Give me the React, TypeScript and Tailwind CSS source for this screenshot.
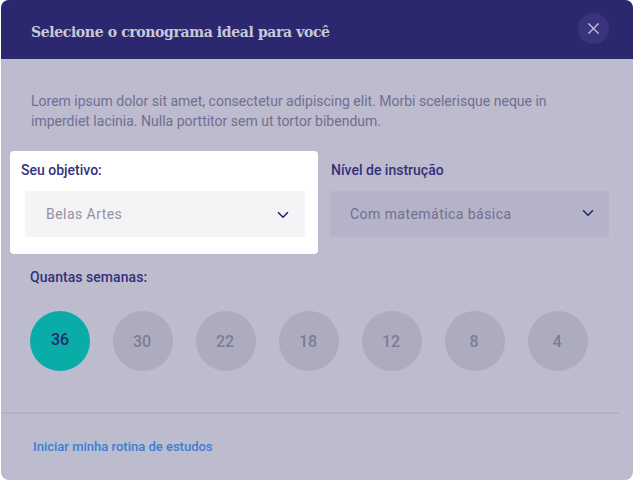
import { ChevronDown, X } from "lucide-react";

const weeks = [36, 30, 22, 18, 12, 8, 4];

export default function App() {
  return (
    <div className="h-[480px] w-[633px] bg-white font-['Roboto',sans-serif]">
      <div className="ml-px flex h-[480px] w-[632px] flex-col overflow-hidden rounded-[8px] bg-[#bdbbce]">
        <header className="flex h-[59px] shrink-0 items-start justify-between bg-[#2c2870] pl-[30px] pr-[24px]">
          <h1 className="mt-[22px] font-['DejaVu_Serif',serif] text-[14px] leading-[20px] font-bold tracking-[-0.37px] text-[#c9c8d8]">
            Selecione o cronograma ideal para você
          </h1>
          <button className="mt-[13px] flex h-[31px] w-[31px] items-center justify-center rounded-full bg-[#39347c] text-[#c5c4d6]">
            <X size={19} strokeWidth={1.5} />
          </button>
        </header>

        <p className="mt-[32px] ml-[30px] w-[530px] text-[14px] leading-[20px] text-[#726e93]">
          Lorem ipsum dolor sit amet, consectetur adipiscing elit. Morbi
          scelerisque neque in imperdiet lacinia. Nulla porttitor sem ut tortor
          bibendum.
        </p>

        <div className="mt-[20px] ml-[9px] flex items-start">
          <div className="h-[103px] w-[308px] rounded-[4px] bg-white pt-[10px] pl-[11px]">
            <label className="block text-[14px] leading-[18px] font-medium text-[#35317a]">
              Seu objetivo:
            </label>
            <div className="mt-[12px] ml-[4px] flex h-[46px] w-[280px] items-center justify-between rounded-[3px] bg-[#f4f4f7] pr-[13px] pl-[21px] text-[14px] tracking-[0.45px] text-[#93919f]">
              <span>Belas Artes</span>
              <ChevronDown size={18} strokeWidth={2.2} className="mt-[2px] text-[#2c2870]" />
            </div>
          </div>
          <div className="ml-[12px] pt-[10px]">
            <label className="ml-px block text-[14px] leading-[18px] font-medium text-[#35317a]">
              Nível de instrução
            </label>
            <div className="mt-[12px] flex h-[46px] w-[279px] items-center justify-between rounded-[3px] bg-[#b5b3c7] pr-[12px] pl-[20px] text-[14px] tracking-[0.45px] text-[#726e93]">
              <span>Com matemática básica</span>
              <ChevronDown size={18} strokeWidth={2.2} className="-mt-[3px] text-[#2c2870]" />
            </div>
          </div>
        </div>

        <div className="mt-[14px] ml-[29px] text-[14px] leading-[18px] font-medium tracking-[0.05px] text-[#35317a]">
          Quantas semanas:
        </div>

        <div className="mt-[25px] ml-[29px] flex gap-[23px]">
          {weeks.map((w, i) => (
            <div
              key={w}
              className={
                i === 0
                  ? "flex h-[60px] w-[60px] items-center justify-center rounded-full bg-[#0aaca8] pb-[2px] text-[16px] font-medium text-[#2c2870]"
                  : "flex h-[60px] w-[60px] items-center justify-center rounded-full bg-[#adacbf] pt-[1px] pr-[2px] text-[16px] font-medium text-[#7d7b95]"
              }
            >
              {w}
            </div>
          ))}
        </div>

        <div className="mt-[41px] h-[2px] w-[618px] bg-[#b3b1c6]" />

        <a className="mt-[24px] ml-[32px] text-[13px] leading-[18px] font-medium text-[#3a7fd5]">
          Iniciar minha rotina de estudos
        </a>
      </div>
    </div>
  );
}
